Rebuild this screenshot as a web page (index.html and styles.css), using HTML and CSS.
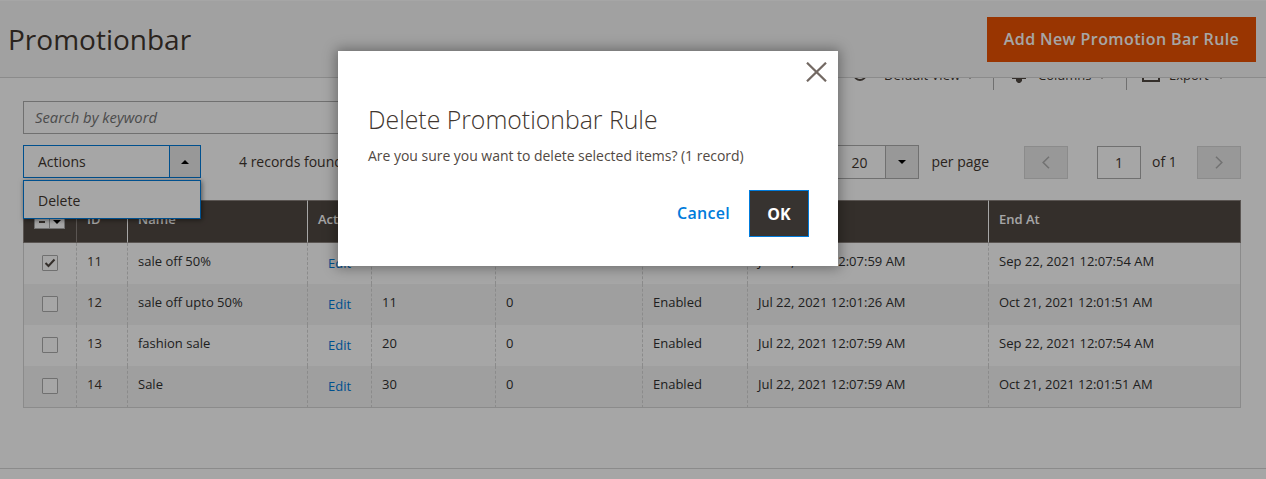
FILE: index.html
```html
<!DOCTYPE html>
<html lang="en">
<head>
    <meta charset="UTF-8">
    <title>Promotionbar</title>
    <link rel="stylesheet" href="styles.css">
</head>
<body>

    <main class="content">
        <div class="view-tools">
            <div class="tool tool-view">
                <svg class="tool-icon" width="16" height="14" viewBox="0 0 16 14"><path d="M1 7c2-5 4-6 7-6s5 1 7 6c-2 5-4 6-7 6s-5-1-7-6z" fill="none" stroke="#514943" stroke-width="2"/></svg>
                <span class="tool-label">Default View</span><i class="tool-caret"></i>
            </div>
            <div class="tool tool-columns">
                <svg class="tool-icon" width="16" height="18" viewBox="0 0 16 18"><path d="M1 0h14v12h-4v2l-2 2H7l-2-2v-2H1z" fill="#514943"/></svg>
                <span class="tool-label">Columns</span><i class="tool-caret"></i>
            </div>
            <div class="tool tool-export">
                <svg class="tool-icon" width="18" height="16" viewBox="0 0 18 16"><path d="M1 1h16v14H1z" fill="none" stroke="#514943" stroke-width="2"/></svg>
                <span class="tool-label">Export</span><i class="tool-caret"></i>
            </div>
        </div>

        <div class="search">
            <input class="search-input" type="text" placeholder="Search by keyword">
        </div>

        <div class="grid-bar">
            <div class="actions">
                <div class="actions-select">
                    <span class="actions-label">Actions</span>
                    <span class="actions-toggle"><i class="caret-up"></i></span>
                </div>
                <div class="actions-menu">Delete</div>
            </div>
            <span class="records">4 records found</span>
            <div class="pager">
                <div class="per-page">
                    <span class="per-page-value">20</span>
                    <span class="per-page-toggle"><i class="caret-down"></i></span>
                </div>
                <span class="per-page-label">per page</span>
                <button class="page-btn page-prev" type="button">
                    <svg width="8" height="13" viewBox="0 0 8 13"><path d="M7 .7 1.2 6.5 7 12.3" fill="none" stroke="#b0b0b0" stroke-width="1.6"/></svg>
                </button>
                <span class="page-current">1</span>
                <span class="page-total">of 1</span>
                <button class="page-btn page-next" type="button">
                    <svg width="8" height="13" viewBox="0 0 8 13"><path d="M1 .7l5.8 5.8L1 12.3" fill="none" stroke="#b0b0b0" stroke-width="1.6"/></svg>
                </button>
            </div>
        </div>

        <table class="grid">
            <colgroup>
                <col class="col-check"><col class="col-id"><col class="col-name"><col class="col-action">
                <col class="col-sort"><col class="col-used"><col class="col-status"><col class="col-start"><col class="col-end">
            </colgroup>
            <thead>
                <tr>
                    <th><span class="head-check"><i class="head-check-box"></i><i class="head-check-arrow"></i></span></th>
                    <th>ID</th>
                    <th>Name</th>
                    <th>Action</th>
                    <th></th>
                    <th></th>
                    <th></th>
                    <th></th>
                    <th>End At</th>
                </tr>
            </thead>
            <tbody>
                <tr>
                    <td><span class="check"><svg width="12" height="10" viewBox="0 0 12 10"><path d="M1.5 5l3 3 6-6.5" fill="none" stroke="#514943" stroke-width="2"/></svg></span></td>
                    <td class="cell-id">11</td>
                    <td>sale off 50%</td>
                    <td class="cell-edit"><a class="edit" href="#">Edit</a></td>
                    <td>10</td>
                    <td>0</td>
                    <td>Enabled</td>
                    <td>Jul 22, 2021 12:07:59 AM</td>
                    <td>Sep 22, 2021 12:07:54 AM</td>
                </tr>
                <tr>
                    <td><span class="check"></span></td>
                    <td class="cell-id">12</td>
                    <td>sale off upto 50%</td>
                    <td class="cell-edit"><a class="edit" href="#">Edit</a></td>
                    <td>11</td>
                    <td>0</td>
                    <td>Enabled</td>
                    <td>Jul 22, 2021 12:01:26 AM</td>
                    <td>Oct 21, 2021 12:01:51 AM</td>
                </tr>
                <tr>
                    <td><span class="check"></span></td>
                    <td class="cell-id">13</td>
                    <td>fashion sale</td>
                    <td class="cell-edit"><a class="edit" href="#">Edit</a></td>
                    <td>20</td>
                    <td>0</td>
                    <td>Enabled</td>
                    <td>Jul 22, 2021 12:07:59 AM</td>
                    <td>Sep 22, 2021 12:07:54 AM</td>
                </tr>
                <tr>
                    <td><span class="check"></span></td>
                    <td class="cell-id">14</td>
                    <td>Sale</td>
                    <td class="cell-edit"><a class="edit" href="#">Edit</a></td>
                    <td>30</td>
                    <td>0</td>
                    <td>Enabled</td>
                    <td>Jul 22, 2021 12:07:59 AM</td>
                    <td>Oct 21, 2021 12:01:51 AM</td>
                </tr>
            </tbody>
        </table>

        <footer class="page-footer"></footer>
    </main>

    <header class="page-header">
        <h1 class="page-title">Promotionbar</h1>
        <button class="add-btn" type="button">Add New Promotion Bar Rule</button>
    </header>

    <div class="overlay"></div>

    <div class="modal">
        <button class="modal-close" type="button" aria-label="Close">
            <svg width="21" height="20" viewBox="0 0 21 20"><path d="M1 .7l19 18.6M20 .7 1 19.3" fill="none" stroke="#736963" stroke-width="2.2"/></svg>
        </button>
        <h2 class="modal-title">Delete Promotionbar Rule</h2>
        <p class="modal-text">Are you sure you want to delete selected items? (1 record)</p>
        <div class="modal-footer">
            <button class="modal-cancel" type="button">Cancel</button>
            <button class="modal-ok" type="button">OK</button>
        </div>
    </div>

</body>
</html>
```

FILE: styles.css
```css
* {
    box-sizing: border-box;
}
html, body {
    height: 100%;
}
body {
    margin: 0;
    height: 479px;
    overflow: hidden;
    position: relative;
    font-family: "Open Sans", Arial, sans-serif;
    font-size: 14px;
    color: #303030;
    background-color: #fff;
}
button {
    font-family: inherit;
    cursor: pointer;
}

.page-header {
    position: absolute;
    top: 0;
    left: 0;
    right: 0;
    height: 78px;
    padding: 17px 10px 0 8px;
    display: flex;
    justify-content: space-between;
    align-items: flex-start;
    background-color: #f8f8f8;
    border-top: 1px solid #fff;
    border-bottom: 1px solid #d6d6d6;
}
.page-title {
    margin: 0;
    font-size: 28px;
    font-weight: 400;
    line-height: 42px;
    color: #41362f;
}
.add-btn {
    width: 269px;
    height: 45px;
    margin-top: -1px;
    padding: 0 0 2px;
    border: 1px solid #eb5202;
    background-color: #eb5202;
    color: #fff;
    font-size: 16px;
    font-weight: 600;
    letter-spacing: 0.4px;
}

.content {
    padding: 61px 25px 0 23px;
}

.view-tools {
    height: 29px;
    display: flex;
    font-size: 13px;
}
.tool {
    display: flex;
    align-items: flex-start;
    height: 29px;
    padding-top: 5px;
    color: #41362f;
    border-left: 1px solid #adadad;
}
.tool-label {
    line-height: 18px;
}
.tool-view {
    margin-left: 829px;
    width: 141px;
    border-left: none;
}
.tool-columns {
    width: 133px;
    padding-left: 17px;
}
.tool-export {
    padding-left: 15px;
}
.tool-icon {
    flex: none;
    margin-right: 11px;
}
.tool-view .tool-icon {
    margin-top: 1px;
    margin-right: 16px;
}
.tool-columns .tool-icon {
    margin-top: 1px;
}
.tool-export .tool-icon {
    margin-right: 9px;
}
.tool-caret {
    flex: none;
    width: 0;
    height: 0;
    margin-top: 9px;
    border: 3px solid transparent;
    border-top: 4px solid #514943;
}
.tool-view .tool-label {
    width: 83px;
}
.tool-columns .tool-label {
    width: 61px;
}
.tool-export .tool-label {
    width: 49px;
}

.search {
    margin-top: 11px;
}
.search-input {
    display: block;
    width: 400px;
    height: 33px;
    padding: 0 11px 2px;
    border: 1px solid #adadad;
    background-color: #fff;
    font-family: inherit;
    font-size: 14.8px;
}
.search-input::placeholder {
    font-style: italic;
    color: #747474;
    opacity: 1;
}

.grid-bar {
    margin-top: 11px;
    height: 55px;
    display: flex;
    align-items: flex-start;
}
.actions {
    position: relative;
    flex: none;
    width: 178px;
}
.actions-select {
    height: 33px;
    display: flex;
    border: 1px solid #007bdb;
    background-color: #fff;
}
.actions-label {
    flex: 1;
    padding-left: 14px;
    line-height: 31px;
    color: #41362f;
}
.actions-toggle, .per-page-toggle {
    display: flex;
    align-items: center;
    justify-content: center;
    background-color: #eaeaea;
}
.actions-toggle {
    width: 31px;
    border-left: 1px solid #007bdb;
}
.caret-up, .caret-down {
    width: 0;
    height: 0;
    border: 4px solid transparent;
}
.caret-up {
    margin-top: -4px;
    border-bottom: 4px solid #000;
}
.caret-down {
    margin-top: 4px;
    border-top: 4px solid #000;
}
/* open dropdown, hangs over the table head */
.actions-menu {
    position: absolute;
    top: 35px;
    left: 0;
    width: 178px;
    height: 39px;
    padding-left: 14px;
    line-height: 40px;
    color: #41362f;
    background-color: #fff;
    border: 1px solid #007bdb;
    box-shadow: 1px 1px 5px rgba(0, 0, 0, 0.5);
    z-index: 2;
}
.records {
    margin-left: 38px;
    line-height: 33px;
    color: #41362f;
}
.pager {
    margin-left: auto;
    display: flex;
    align-items: flex-start;
}
.per-page {
    width: 94px;
    height: 34px;
    display: flex;
    border: 1px solid #adadad;
    background-color: #fff;
}
.per-page-value {
    flex: 1;
    padding-left: 25px;
    line-height: 34px;
    color: #41362f;
}
.per-page-toggle {
    width: 33px;
    border-left: 1px solid #adadad;
}
.per-page-label {
    margin: 0 35px 0 12px;
    line-height: 34px;
    color: #41362f;
}
.page-btn {
    width: 44px;
    height: 33px;
    margin-top: 1px;
    padding: 0;
    display: flex;
    align-items: center;
    justify-content: center;
    border: 1px solid #d6d6d6;
    background-color: #eaeaea;
}
.page-current {
    width: 44px;
    height: 33px;
    margin: 1px 0 0 29px;
    text-align: center;
    line-height: 31px;
    border: 1px solid #adadad;
    background-color: #fff;
    color: #41362f;
}
.page-total {
    width: 56px;
    padding-left: 11px;
    line-height: 34px;
    color: #41362f;
}

.grid {
    width: 1218px;
    table-layout: fixed;
    border-collapse: separate;
    border-spacing: 0;
    font-size: 13px;
    color: #303030;
}
.col-check { width: 53px; }
.col-id { width: 51px; }
.col-name { width: 180px; }
.col-action { width: 64px; }
.col-sort { width: 124px; }
.col-used { width: 147px; }
.col-status { width: 105px; }
.col-start { width: 241px; }
.col-end { width: 253px; }

.grid th {
    height: 43px;
    padding: 0 10px 6px;
    text-align: left;
    font-weight: 600;
    color: #fff;
    background-color: #514943;
    border-top: 1px solid #8a837f;
    border-bottom: 1px solid #8a837f;
    border-left: 1px solid #8a837f;
}
.grid th:first-child {
    padding: 0 0 0 10px;
}
.grid th:nth-child(3), .grid th:nth-child(4), .grid th:nth-child(9) {
    border-left-color: #fff;
}
.grid th:last-child {
    border-right: 1px solid #8a837f;
}
.head-check {
    display: flex;
    width: 31px;
    height: 17px;
    margin-top: -2px;
    border: 1px solid #adadad;
    background-color: #fff;
}
.head-check-box {
    width: 15px;
    position: relative;
    border-right: 1px solid #adadad;
}
/* dash and arrow of the select-all control */
.head-check-box::after {
    content: "";
    position: absolute;
    left: 4px;
    top: 8px;
    width: 6px;
    height: 2px;
    background-color: #514943;
}
.head-check-arrow {
    flex: 1;
    position: relative;
}
.head-check-arrow::after {
    content: "";
    position: absolute;
    left: 3px;
    top: 7px;
    border: 4px solid transparent;
    border-top: 4px solid #000;
}
.grid td {
    height: 41px;
    padding: 9px 10px 0;
    vertical-align: top;
    line-height: 18px;
    border-left: 1px dashed #d6d6d6;
}
.grid td:first-child {
    padding-left: 18px;
    border-left: 1px solid #d6d6d6;
}
.grid td:last-child {
    border-right: 1px solid #d6d6d6;
}
.grid tbody tr:nth-child(even) td {
    background-color: #f5f5f5;
}
.grid tbody tr:last-child td {
    height: 42px;
    border-bottom: 1px solid #d6d6d6;
}
.cell-id {
    color: #41362f;
}
.grid td.cell-edit {
    padding-left: 20px;
}
.edit {
    display: block;
    margin-top: 2px;
    text-decoration: none;
    color: #007bdb;
}
.check {
    display: flex;
    align-items: center;
    justify-content: center;
    width: 16px;
    height: 16px;
    margin-top: 3px;
    border: 1px solid #adadad;
    border-radius: 1px;
    background-color: #fff;
}

.page-footer {
    margin-top: 60px;
    height: 20px;
    margin-left: -23px;
    margin-right: -25px;
    border-top: 1px solid #d6d6d6;
    background-color: #fff;
}

.overlay {
    position: absolute;
    inset: 0;
    background-color: rgba(0, 0, 0, 0.35);
    z-index: 5;
}

.modal {
    position: absolute;
    top: 51px;
    left: 338px;
    width: 500px;
    height: 215px;
    padding: 52px 29px 0 30px;
    background-color: #fff;
    box-shadow: 0 0 12px 2px rgba(0, 0, 0, 0.35);
    z-index: 6;
}
.modal-close {
    position: absolute;
    top: 11px;
    right: 11px;
    padding: 0;
    border: none;
    background: none;
    line-height: 0;
}
.modal-title {
    margin: 0;
    font-size: 24.8px;
    font-weight: 300;
    line-height: 33px;
    color: #41362f;
}
.modal-text {
    margin: 10px 0 0;
    line-height: 20px;
    letter-spacing: -0.03px;
    color: #514943;
}
.modal-footer {
    display: flex;
    justify-content: flex-end;
    align-items: center;
    margin-top: 24px;
}
.modal-cancel {
    margin-right: 19px;
    padding: 0 0 2px;
    border: none;
    background: none;
    font-size: 16px;
    font-weight: 600;
    letter-spacing: 0.3px;
    color: #007bdb;
}
.modal-ok {
    width: 60px;
    height: 47px;
    padding: 0;
    border: 1px solid #007bdb;
    background-color: #373330;
    color: #fff;
    font-size: 16px;
    font-weight: 700;
}
```
